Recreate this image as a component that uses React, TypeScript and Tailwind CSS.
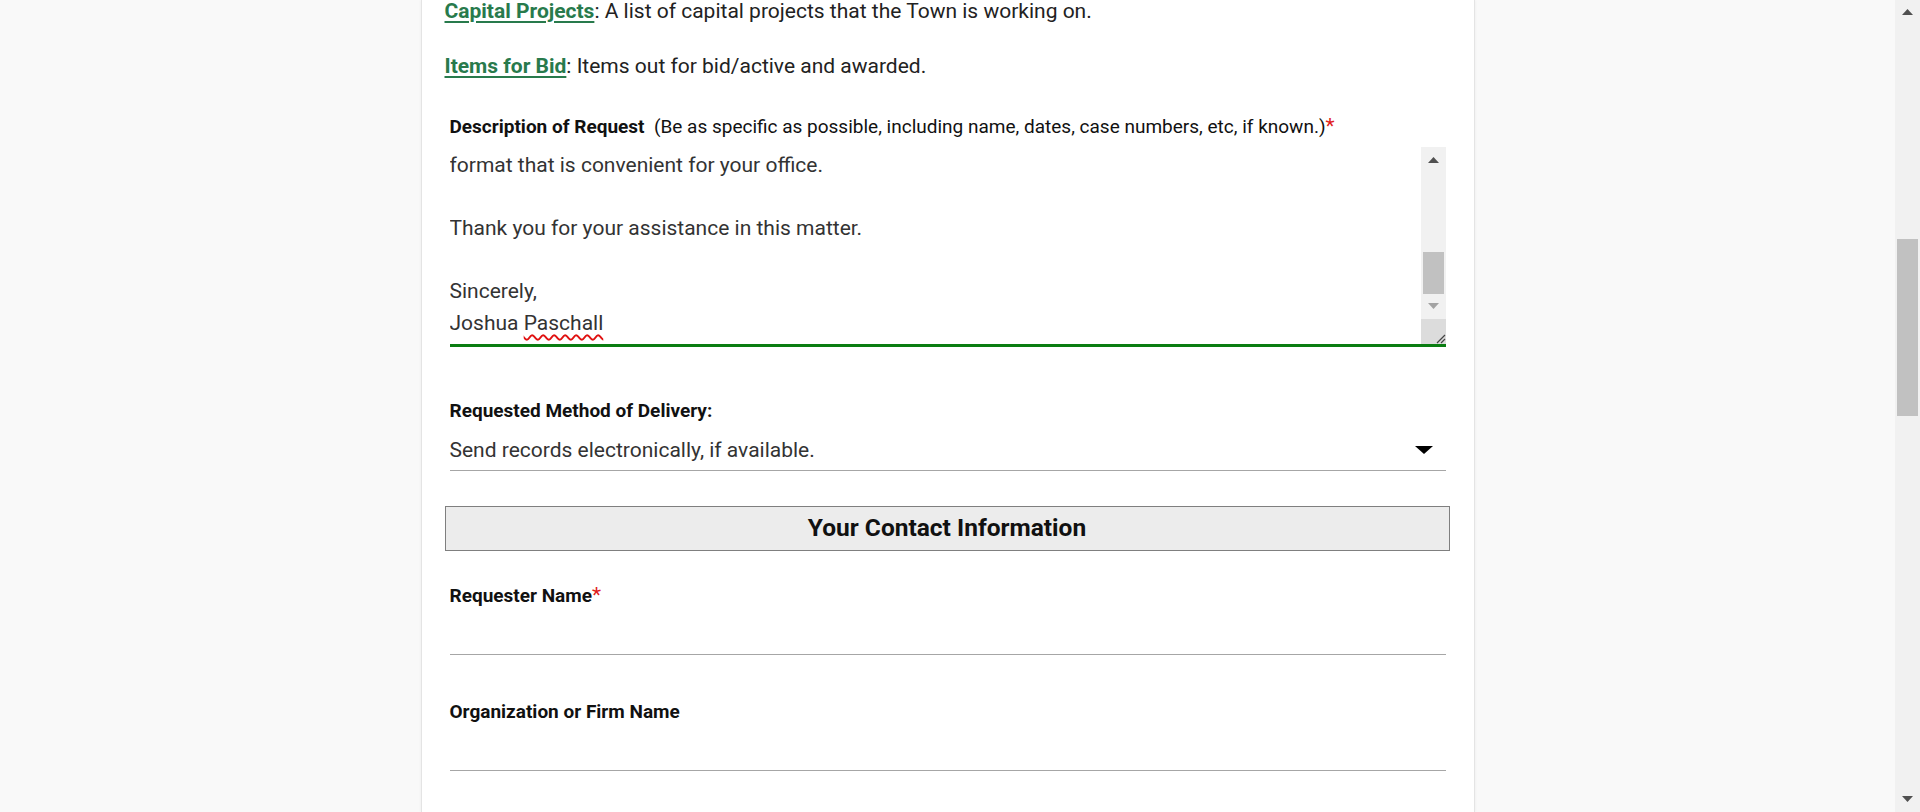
import { ReactNode } from 'react'

const LINK = 'font-bold text-[#287a4c] underline underline-offset-[3px] decoration-[2px]'

function Label({ children, required }: { children: ReactNode; required?: boolean }): JSX.Element {
  return (
    <div className="text-[19px] leading-[22px] text-[#111] whitespace-nowrap">
      {children}
      {required && <span className="text-[#e0201c] text-[21px]">*</span>}
    </div>
  )
}

function UpArrow({ color }: { color: string }): JSX.Element {
  return (
    <svg width="11" height="6" viewBox="0 0 11 6">
      <path d="M0 6 L5.5 0 L11 6 Z" fill={color} />
    </svg>
  )
}

function DownArrow({ color }: { color: string }): JSX.Element {
  return (
    <svg width="11" height="6" viewBox="0 0 11 6">
      <path d="M0 0 L11 0 L5.5 6 Z" fill={color} />
    </svg>
  )
}

function TextareaScrollbar(): JSX.Element {
  return (
    <div className="w-[25px] flex flex-col bg-[#f1f1f1] shrink-0">
      <div className="h-[22px] flex items-end justify-center pb-[6px] pt-[10px]">
        <UpArrow color="#505050" />
      </div>
      <div className="flex-1 flex flex-col px-[2px]">
        <div className="h-[83px]" />
        <div className="h-[42px] bg-[#c1c1c1]" />
      </div>
      <div className="h-[25px] flex justify-center pt-[9px]">
        <DownArrow color="#a3a3a3" />
      </div>
      <div className="h-[25px] bg-[#dcdcdc] flex items-end justify-end">
        <svg width="12" height="12" viewBox="0 0 12 12">
          <path d="M11 3 L3 11 M11 7 L7 11" stroke="#444" strokeWidth="1.2" />
        </svg>
      </div>
    </div>
  )
}

function DescriptionBox(): JSX.Element {
  const lines = [
    'format that is convenient for your office.',
    '',
    'Thank you for your assistance in this matter.',
    '',
    'Sincerely,',
  ]
  return (
    <div className="flex h-[200px] border-b-[3px] border-[#0a7d12] overflow-hidden">
      <div className="flex-1 pt-[3px] text-[21px] leading-[31.6px] text-[#333]">
        {lines.map((l, i) => (
          <div key={i} className="h-[31.6px]">{l}</div>
        ))}
        <div className="h-[31.6px]">
          Joshua{' '}
          <span className="underline decoration-wavy decoration-[#e01010] decoration-[1.5px] underline-offset-[4px]">
            Paschall
          </span>
        </div>
      </div>
      <TextareaScrollbar />
    </div>
  )
}

function TextField(): JSX.Element {
  return <div className="h-[48px] border-b border-[#a6a6a6]" />
}

function PageScrollbar(): JSX.Element {
  return (
    <div className="w-[25px] h-full bg-[#f1f1f1] flex flex-col shrink-0">
      <div className="h-[17px] flex items-end justify-center pb-[2px]">
        <UpArrow color="#505050" />
      </div>
      <div className="flex-1 flex flex-col px-[2px]">
        <div className="h-[222px]" />
        <div className="h-[177px] bg-[#c1c1c1]" />
      </div>
      <div className="h-[17px] flex items-start justify-center pt-[1px]">
        <DownArrow color="#505050" />
      </div>
    </div>
  )
}

export default function App(): JSX.Element {
  return (
    <div className="flex h-[812px] w-full overflow-hidden bg-[#f9f9f9] font-[Roboto,'Liberation_Sans',sans-serif]">
      <div className="flex-1 flex justify-center">
        <div className="w-[1054px] h-full bg-white border-x border-[#e4e4e4] shadow-[0_0_3px_rgba(0,0,0,0.06)] pl-[23px] pr-[24px]">
          <p className="text-[21px] leading-[22px] text-[#222] whitespace-nowrap">
            <a className={LINK}>Capital Projects</a>: A list of capital projects that the Town is working on.
          </p>
          <p className="mt-[33px] text-[21px] leading-[22px] text-[#222] whitespace-nowrap">
            <a className={LINK}>Items for Bid</a>: Items out for bid/active and awarded.
          </p>

          <div className="ml-[5px] mr-[4px] mt-[38px]">
            <Label required>
              <span className="font-bold">Description of Request</span>
              {'\u00a0\u00a0'}(Be as specific as possible, including name, dates, case numbers, etc, if known.)
            </Label>
            <div className="mt-[9px]">
              <DescriptionBox />
            </div>
          </div>

          <div className="ml-[5px] mr-[4px] mt-[53px]">
            <Label>
              <span className="font-bold">Requested Method of Delivery:</span>
            </Label>
            <div className="h-[49px] pt-[17px] border-b border-[#a6a6a6]">
              <div className="h-[22px] flex items-center justify-between">
                <span className="text-[21px] leading-[22px] text-[#333]">Send records electronically, if available.</span>
                <svg width="18" height="8" viewBox="0 0 18 8" className="mr-[13px]">
                  <path d="M0 0 L18 0 L9 8 Z" fill="#000" />
                </svg>
              </div>
            </div>
          </div>

          <div className="mt-[35px] h-[45px] border border-[#7f7f7f] bg-[#ececec] flex items-center justify-center">
            <span className="text-[24.5px] font-bold text-[#111]">Your Contact Information</span>
          </div>

          <div className="ml-[5px] mr-[4px] mt-[33px]">
            <Label required>
              <span className="font-bold">Requester Name</span>
            </Label>
            <TextField />
          </div>

          <div className="ml-[5px] mr-[4px] mt-[46px]">
            <Label>
              <span className="font-bold">Organization or Firm Name</span>
            </Label>
            <TextField />
          </div>
        </div>
      </div>
      <PageScrollbar />
    </div>
  )
}
